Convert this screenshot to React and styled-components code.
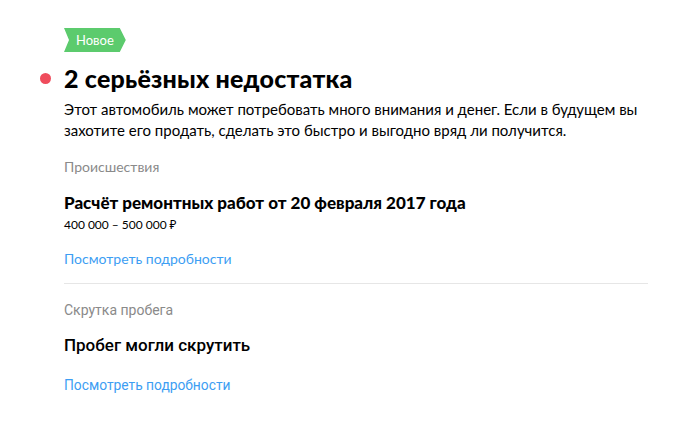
import React from "react";
import styled, { createGlobalStyle } from "styled-components";

const GlobalStyle = createGlobalStyle`
  body {
    margin: 0;
    background: #fff;
    font-family: "Lato", "Noto Sans", sans-serif;
    color: #000;
  }
`;

const Page = styled.div`
  width: 690px;
  height: 427px;
  box-sizing: border-box;
  padding: 28px 42px 0 64px;
`;

const Badge = styled.div`
  display: inline-flex;
  align-items: center;
  height: 24px;
  padding: 0 12px 1px 12px;
  box-sizing: border-box;
  background: #5ccb6d;
  color: #fff;
  font-family: "Lato", sans-serif;
  font-size: 13px;
  clip-path: polygon(0 0, calc(100% - 6px) 0, 100% 50%, calc(100% - 6px) 100%, 0 100%, 5px 50%);
`;

const Title = styled.h1`
  display: flex;
  align-items: center;
  margin: 11px 0 0;
  font-family: "Lato", sans-serif;
  font-weight: 900;
  font-size: 25px;
  line-height: 30px;
  letter-spacing: 0.2px;
`;

const Dot = styled.span`
  width: 11px;
  height: 11px;
  border-radius: 50%;
  background: #ef4c5c;
  margin-left: -24px;
  margin-right: 13px;
  flex-shrink: 0;
`;

const Description = styled.p`
  margin: 6px 0 0;
  font-size: 15px;
  line-height: 21px;
`;

const Section = styled.section`
  padding: ${(p) => (p.first ? "16px" : "16px")} 0 0;
  border-top: ${(p) => (p.first ? "none" : "1px solid #e6e6e6")};
  margin-top: ${(p) => (p.first ? "0" : "14px")};
`;

const Label = styled.div`
  font-family: ${(p) => (p.alt ? '"Roboto", sans-serif' : '"Lato", sans-serif')};
  font-size: 14px;
  line-height: 20px;
  color: #8a8a8a;
`;

const ItemTitle = styled.div`
  margin-top: ${(p) => (p.alt ? "14px" : "15px")};
  font-family: ${(p) => (p.alt ? '"Roboto", sans-serif' : '"Lato", sans-serif')};
  font-weight: ${(p) => (p.alt ? 500 : 900)};
  font-size: 17px;
  line-height: 22px;
`;

const Price = styled.div`
  margin-top: 3px;
  font-size: 12px;
  line-height: 16px;
`;

const Link = styled.a`
  display: block;
  margin-top: ${(p) => (p.alt ? "19px" : "16px")};
  font-family: ${(p) => (p.alt ? '"Roboto", sans-serif' : '"Lato", sans-serif')};
  font-size: ${(p) => (p.alt ? "13.8px" : "14px")};
  line-height: 20px;
  color: #3d9ef3;
  text-decoration: none;
`;

export default function App() {
  return (
    <>
      <GlobalStyle />
      <Page>
        <Badge>Новое</Badge>
        <Title>
          <Dot />2 серьёзных недостатка
        </Title>
        <Description>
          Этот автомобиль может потребовать много внимания и денег. Если в будущем вы
          захотите его продать, сделать это быстро и выгодно вряд ли получится.
        </Description>
        <Section first>
          <Label>Происшествия</Label>
          <ItemTitle>Расчёт ремонтных работ от 20 февраля 2017 года</ItemTitle>
          <Price>{"400\u202F000 – 500\u202F000\u202F₽"}</Price>
          <Link href="#">Посмотреть подробности</Link>
        </Section>
        <Section>
          <Label alt>Скрутка пробега</Label>
          <ItemTitle alt>Пробег могли скрутить</ItemTitle>
          <Link alt href="#">Посмотреть подробности</Link>
        </Section>
      </Page>
    </>
  );
}
